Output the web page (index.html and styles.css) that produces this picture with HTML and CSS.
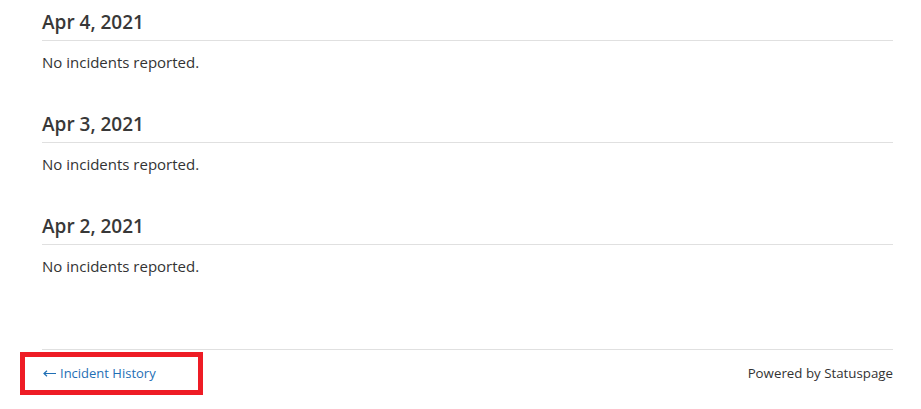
FILE: index.html
```html
<!DOCTYPE html>
<html>
<head>
<meta charset="utf-8">
<link rel="stylesheet" href="styles.css">
</head>
<body>
<div class="container">
  <div class="day">
    <h2 class="date">Apr 4, 2021</h2>
    <p class="none">No incidents reported.</p>
  </div>
  <div class="day">
    <h2 class="date">Apr 3, 2021</h2>
    <p class="none">No incidents reported.</p>
  </div>
  <div class="day">
    <h2 class="date">Apr 2, 2021</h2>
    <p class="none">No incidents reported.</p>
  </div>
  <div class="footer">
    <a class="history" href="#"><svg class="arrow" width="13" height="7" viewBox="0 0 13 7"><path d="M13 3.5H1M4 0.8L1 3.5L4 6.2" fill="none" stroke="currentColor" stroke-width="1.2"/></svg>Incident History</a>
    <span class="powered">Powered by Statuspage</span>
    <div class="highlight"></div>
  </div>
</div>
</body>
</html>
```
FILE: styles.css
```css
html, body {
  margin: 0;
  padding: 0;
  background: #ffffff;
}
body {
  font-family: "Open Sans", "Liberation Sans", Arial, sans-serif;
  color: #333333;
}
.container {
  width: 851px;
  margin-left: 42px;
  padding-top: 10px;
  padding-bottom: 40px;
}
.day {
  margin-bottom: 40px;
}
.date {
  margin: 0;
  font-size: 19px;
  line-height: 24px;
  font-weight: 600;
  color: #383838;
  padding-bottom: 6px;
  border-bottom: 1px solid #e0e0e0;
}
.none {
  margin: 11px 0 0 0;
  font-size: 15px;
  line-height: 20px;
  color: #333333;
}
.footer {
  position: relative;
  margin-top: 73px;
  border-top: 1px solid #e0e0e0;
  padding-top: 14px;
  display: flex;
  justify-content: space-between;
  font-size: 13px;
  line-height: 18px;
}
.history {
  color: #1f6fb5;
  text-decoration: none;
  padding-left: 1px;
}
.arrow {
  margin-right: 4px;
  vertical-align: 1px;
}
.powered {
  color: #333333;
  font-size: 13.3px;
}
.highlight {
  position: absolute;
  left: -22px;
  top: 2px;
  width: 173px;
  height: 33px;
  border: 5px solid #ee1c25;
}
```
